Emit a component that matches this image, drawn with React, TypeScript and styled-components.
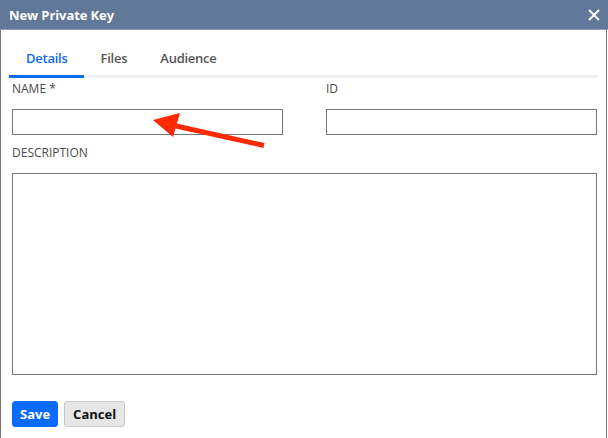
import styled, { createGlobalStyle } from "styled-components";

const GlobalStyle = createGlobalStyle`
  html, body {
    margin: 0;
    padding: 0;
    background: #ffffff;
    font-family: "Open Sans", "Liberation Sans", sans-serif;
  }
  * { box-sizing: border-box; }
`;

// Окно диалога
const Dialog = styled.div`
  position: relative;
  width: 608px;
  height: 438px;
  display: flex;
  flex-direction: column;
  background: #fff;
`;

const Header = styled.div`
  height: 30px;
  flex: none;
  display: flex;
  align-items: center;
  justify-content: space-between;
  padding: 1px 7px 0 9px;
  background: #617899;
  border-bottom: 1px solid #8b9bb6;
`;

const Title = styled.div`
  color: #fff;
  font-weight: 700;
  font-size: 13px;
  letter-spacing: -0.1px;
`;

const CloseButton = styled.button`
  width: 14px;
  height: 14px;
  padding: 0;
  border: none;
  background: transparent;
  display: flex;
  align-items: center;
  justify-content: center;
`;

const Body = styled.div`
  flex: 1;
  display: flex;
  flex-direction: column;
  border-left: 1px solid #777;
  border-right: 1px solid #777;
  margin-right: 1px;
`;

const TabBar = styled.div`
  display: flex;
  margin: 13px 8px 0 8px;
  border-bottom: 3px solid #eef0f4;
`;

const Tab = styled.div<{ $active?: boolean }>`
  height: 30px;
  padding: 0 16px 2px 17px;
  margin-bottom: -3px;
  display: flex;
  align-items: center;
  font-size: 13px;
  font-weight: 600;
  letter-spacing: -0.25px;
  color: ${(p) => (p.$active ? "#0a6cf5" : "#555")};
  border-bottom: 3px solid ${(p) => (p.$active ? "#0a6cf5" : "transparent")};
  box-sizing: content-box;
`;

const Form = styled.div`
  padding: 2px 10px 0 11px;
  display: flex;
  flex-direction: column;
`;

const Row = styled.div`
  display: grid;
  grid-template-columns: 271px 271px;
  column-gap: 43px;
`;

const Field = styled.div`
  display: flex;
  flex-direction: column;
`;

const Label = styled.label`
  font-size: 12px;
  line-height: 18px;
  color: #4a4a4a;
  margin-bottom: 11px;
`;

const Input = styled.input`
  height: 26px;
  border: 1px solid #777;
  padding: 0 6px;
  font-family: inherit;
  font-size: 12px;
  outline: none;
`;

const DescriptionLabel = styled(Label)`
  margin-top: 9px;
`;

const TextArea = styled.textarea`
  height: 202px;
  width: 585px;
  border: 1px solid #777;
  resize: none;
  font-family: inherit;
  outline: none;
`;

const Footer = styled.div`
  display: flex;
  gap: 6px;
  padding: 26px 0 0 11px;
`;

const Button = styled.button<{ $primary?: boolean }>`
  height: 26px;
  padding: 0 ${(p) => (p.$primary ? "7px" : "8px")};
  border-radius: 3px;
  font-family: inherit;
  font-size: 13px;
  font-weight: 700;
  color: ${(p) => (p.$primary ? "#fff" : "#111")};
  background: ${(p) => (p.$primary ? "#0a6cff" : "#e6e6e6")};
  border: 1px solid ${(p) => (p.$primary ? "#0a6cff" : "#c8c8c8")};
`;

// Красная стрелка поверх формы
const Arrow = styled.svg`
  position: absolute;
  left: 0;
  top: 0;
  pointer-events: none;
`;

export default function App() {
  return (
    <>
      <GlobalStyle />
      <Dialog>
        <Header>
          <Title>New Private Key</Title>
          <CloseButton aria-label="close">
            <svg width="12" height="12" viewBox="0 0 12 12">
              <path d="M1 1L11 11M11 1L1 11" stroke="#fff" strokeWidth="1.8" />
            </svg>
          </CloseButton>
        </Header>
        <Body>
          <TabBar>
            <Tab $active>Details</Tab>
            <Tab>Files</Tab>
            <Tab>Audience</Tab>
          </TabBar>
          <Form>
            <Row>
              <Field>
                <Label>NAME *</Label>
                <Input />
              </Field>
              <Field>
                <Label>ID</Label>
                <Input />
              </Field>
            </Row>
            <DescriptionLabel>DESCRIPTION</DescriptionLabel>
            <TextArea />
          </Form>
          <Footer>
            <Button $primary>Save</Button>
            <Button>Cancel</Button>
          </Footer>
        </Body>
        <Arrow width="608" height="438" viewBox="0 0 608 438">
          <line x1="264" y1="145.5" x2="176" y2="126" stroke="#ff2a00" strokeWidth="5" />
          <polygon points="153,120 180,113 173,137" fill="#ff2a00" />
        </Arrow>
      </Dialog>
    </>
  );
}
